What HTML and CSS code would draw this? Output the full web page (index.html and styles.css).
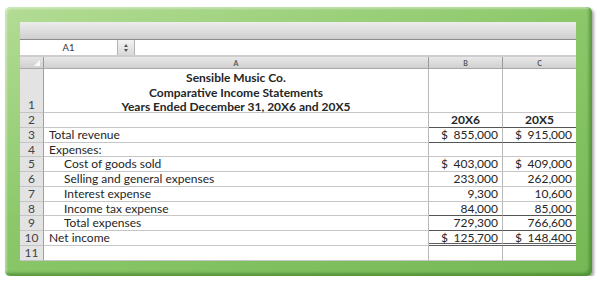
FILE: index.html
```html
<!DOCTYPE html>
<html>
<head>
<meta charset="utf-8">
<link rel="stylesheet" href="styles.css">
</head>
<body>
<div class="frame">
  <div class="sheet">
    <div class="toolbar"></div>
    <div class="formula">
      <div class="namebox">A1</div>
      <div class="stepper"><span class="up"></span><span class="down"></span></div>
      <div class="fx"></div>
    </div>
    <div class="grid">
      <div class="corner"><span class="tri"></span></div>
      <div class="colhead">A</div>
      <div class="colhead">B</div>
      <div class="colhead last">C</div>

      <div class="rh r1">1</div>
      <div class="c a r1 title">Sensible Music Co.<br>Comparative Income Statements<br>Years Ended December 31, 20X6 and 20X5</div>
      <div class="c r1"></div>
      <div class="c r1 last"></div>

      <div class="rh">2</div>
      <div class="c a"></div>
      <div class="c yr dk">20X6</div>
      <div class="c yr dk last">20X5</div>

      <div class="rh">3</div>
      <div class="c a">Total revenue</div>
      <div class="c num dk"><span>$</span><span>855,000</span></div>
      <div class="c num dk last"><span>$</span><span>915,000</span></div>

      <div class="rh">4</div>
      <div class="c a">Expenses:</div>
      <div class="c"></div>
      <div class="c last"></div>

      <div class="rh">5</div>
      <div class="c a ind">Cost of goods sold</div>
      <div class="c num"><span>$</span><span>403,000</span></div>
      <div class="c num last"><span>$</span><span>409,000</span></div>

      <div class="rh">6</div>
      <div class="c a ind">Selling and general expenses</div>
      <div class="c num"><span></span><span>233,000</span></div>
      <div class="c num last"><span></span><span>262,000</span></div>

      <div class="rh">7</div>
      <div class="c a ind">Interest expense</div>
      <div class="c num"><span></span><span>9,300</span></div>
      <div class="c num last"><span></span><span>10,600</span></div>

      <div class="rh">8</div>
      <div class="c a ind">Income tax expense</div>
      <div class="c num dk"><span></span><span>84,000</span></div>
      <div class="c num dk last"><span></span><span>85,000</span></div>

      <div class="rh">9</div>
      <div class="c a ind">Total expenses</div>
      <div class="c num dk"><span></span><span>729,300</span></div>
      <div class="c num dk last"><span></span><span>766,600</span></div>

      <div class="rh">10</div>
      <div class="c a">Net income</div>
      <div class="c num dbl"><span>$</span><span>125,700</span></div>
      <div class="c num dbl last"><span>$</span><span>148,400</span></div>

      <div class="rh">11</div>
      <div class="c a"></div>
      <div class="c"></div>
      <div class="c last"></div>
    </div>
  </div>
</div>
</body>
</html>
```

FILE: styles.css
```css
html, body {
  margin: 0;
  padding: 0;
  background: #ffffff;
}

body {
  font-family: Lato, "Open Sans", sans-serif;
  color: #262626;
}

.frame {
  margin: 7px 0 0 5px;
  width: 587px;
  height: 269px;
  box-sizing: border-box;
  padding: 15px 16px 15px 15px;
  border-radius: 5px;
  background: linear-gradient(160deg, #b3dc95 0%, #8cc86a 45%, #76b855 100%);
  box-shadow: inset -3px -3px 3px rgba(40, 100, 20, 0.45), inset 2px 2px 2px rgba(255, 255, 255, 0.35), 2px 2px 3px rgba(0, 0, 0, 0.35);
}

.sheet {
  background: #ffffff;
  height: 100%;
  display: flex;
  flex-direction: column;
  overflow: hidden;
}

.toolbar {
  height: 17px;
  background: linear-gradient(#ededed, #cfcfcf);
  border-bottom: 1px solid #8c8c8c;
}

.formula {
  display: flex;
  height: 15px;
  border-bottom: 2px solid #cdcdcd;
}

.namebox {
  width: 97px;
  border-right: 1px solid #b4b4b4;
  font-size: 9.5px;
  line-height: 16px;
  text-align: center;
  color: #333;
}

.stepper {
  width: 16px;
  border-right: 1px solid #b4b4b4;
  background: linear-gradient(#f2f2f2, #d9d9d9);
  display: flex;
  flex-direction: column;
  align-items: center;
  justify-content: center;
  gap: 2px;
}

.stepper .up {
  width: 0;
  height: 0;
  border-left: 2px solid transparent;
  border-right: 2px solid transparent;
  border-bottom: 3px solid #555;
}

.stepper .down {
  width: 0;
  height: 0;
  border-left: 2px solid transparent;
  border-right: 2px solid transparent;
  border-top: 3px solid #555;
}

.fx {
  flex: 1;
}

.grid {
  display: grid;
  grid-template-columns: 24px 385px 74px 73px;
  grid-template-rows: 12px 44px repeat(10, 14.75px);
  font-size: 12px;
}

.corner {
  background: linear-gradient(#e4e4e4, #d0d0d0);
  border-right: 1px solid #9a9a9a;
  border-bottom: 1px solid #a8a8a8;
  position: relative;
}

.corner .tri {
  position: absolute;
  right: 3px;
  bottom: 2px;
  width: 0;
  height: 0;
  border-left: 6px solid transparent;
  border-bottom: 6px solid #fafafa;
}

.colhead {
  background: linear-gradient(#e8e8e8, #d0d0d0);
  border-right: 1px solid #9a9a9a;
  border-bottom: 1px solid #a8a8a8;
  font-size: 7px;
  font-weight: bold;
  color: #555;
  text-align: center;
  line-height: 12px;
}

.colhead.last {
  border-right: none;
}

.rh {
  background: #e3e3e3;
  border-right: 1px solid #a0a0a0;
  border-bottom: 1px solid #c4c4c4;
  text-align: center;
  font-size: 12px;
  color: #444;
  line-height: 14px;
  box-sizing: border-box;
}

.rh.r1 {
  display: flex;
  align-items: flex-end;
  justify-content: center;
}

.c {
  border-right: 1px solid #b9b9b9;
  border-bottom: 1px solid #c6c6c6;
  box-sizing: border-box;
  line-height: 14px;
  white-space: nowrap;
}

.c.last {
  border-right: none;
}

.c.a {
  padding-left: 5px;
}

.c.ind {
  padding-left: 20px;
}

.title {
  text-align: center;
  font-weight: bold;
  padding-top: 2px;
  font-size: 12px;
  line-height: 14.5px;
}

.c.a.title {
  padding-left: 0;
}

.yr {
  text-align: center;
  font-weight: bold;
}

.num {
  display: flex;
  justify-content: space-between;
  padding: 0 4px 0 12px;
}

.dk {
  border-bottom: 1px solid #555;
}

.dbl {
  border-bottom: 3px double #5f5f5f;
}
```
